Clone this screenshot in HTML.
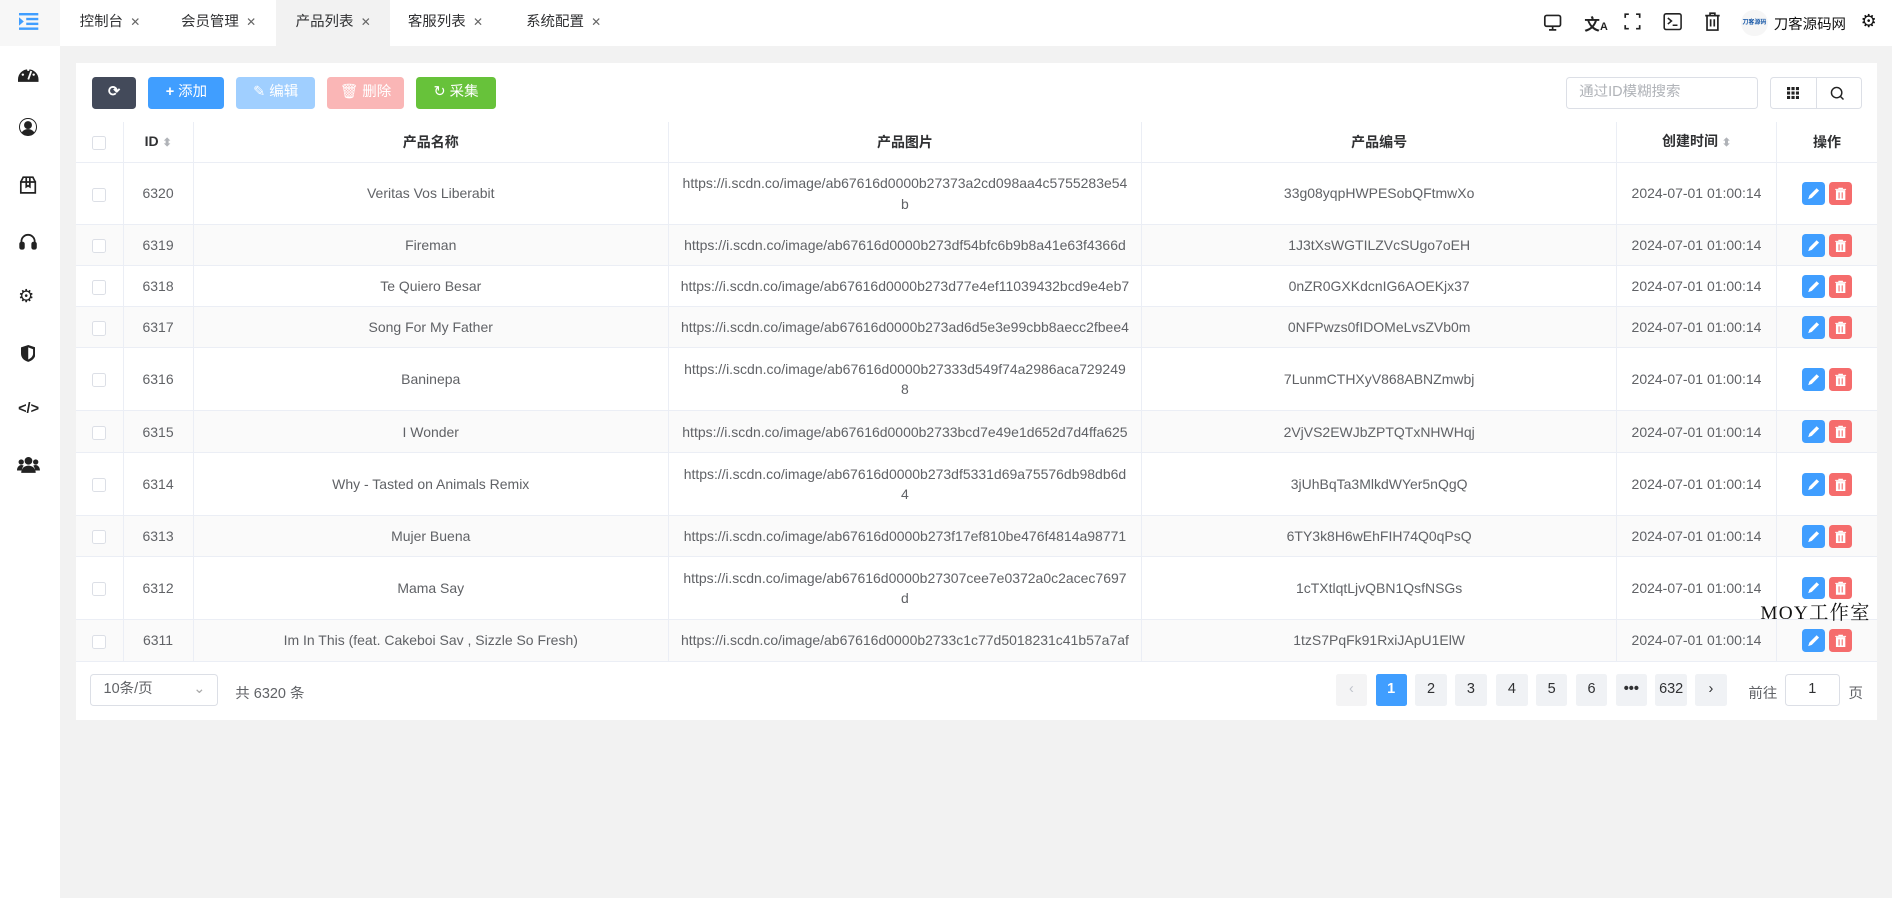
<!DOCTYPE html>
<html><head><meta charset="utf-8"><style>
html{zoom:1.2066}
body{margin:0;width:1568px;height:744px;background:#f2f2f2;font-family:"Liberation Sans","Noto Sans CJK SC",sans-serif;font-size:12px;color:#606266;position:relative;overflow:hidden}
.abs{position:absolute}
.top{left:0;top:0;width:1568px;height:38px;background:#fff}
.side{left:0;top:38px;width:50px;height:706px;background:#fff}
.corner{left:0;top:0;width:50px;height:38px;background:#f7f7f7}
.tab{top:0;height:38px;line-height:38px;font-size:12px;color:#303133}
.tab i{font-style:normal;color:#666;margin-left:6px;font-size:10px}
.card{left:63px;top:52px;width:1493px;height:545px;background:#fff}
.btn{top:64px;height:26px;border-radius:3px;color:#fff;line-height:26px;text-align:center;font-size:12px}
table{position:absolute;left:63px;top:101px;width:1493px;border-collapse:collapse;table-layout:fixed}
td,th{border-bottom:1px solid #ebeef5;border-right:1px solid #ebeef5;text-align:center;padding:0 10px;font-size:11.6px;line-height:17px;vertical-align:middle;word-break:break-all}
td.nw{white-space:nowrap;padding:0 2px}
th{height:33px;color:#303133;font-weight:bold}
tr.s td{background:#fafafa}
.cb{display:inline-block;width:10px;height:10px;border:1px solid #dcdfe6;border-radius:2px;background:#fff;vertical-align:middle}
.op{display:inline-block;width:19px;height:19px;border-radius:3px;vertical-align:middle;margin:0 2px;position:relative}
.op svg{position:absolute;left:4px;top:4px}
.pg{top:559px;width:26px;height:26px;background:#f0f2f5;border-radius:2px;text-align:center;line-height:26px;color:#303133;font-size:12px}
</style></head><body>
<div class="abs top"></div>
<div class="abs corner"></div>
<svg class="abs" style="left:16px;top:11px" width="16" height="14" viewBox="0 0 16 14"><g fill="#409eff"><rect x="0" y="0" width="16" height="2"/><rect x="6" y="4" width="10" height="2"/><rect x="6" y="8" width="10" height="2"/><rect x="0" y="12" width="16" height="2"/><path d="M0 3.5L4 7L0 10.5Z"/></g></svg>
<div class="abs" style="left:229px;top:0;width:94px;height:38px;background:#f2f2f2"></div>
<div class="abs tab" style="left:66px">控制台<i>✕</i></div>
<div class="abs tab" style="left:150px">会员管理<i>✕</i></div>
<div class="abs tab" style="left:245px">产品列表<i>✕</i></div>
<div class="abs tab" style="left:338px">客服列表<i>✕</i></div>
<div class="abs tab" style="left:436px">系统配置<i>✕</i></div>
<svg class="abs" style="left:1279px;top:11px" width="16" height="16" viewBox="0 0 16 16" fill="none" stroke="#222" stroke-width="1.4"><rect x="1.5" y="2" width="13" height="9" rx="1.5"/><path d="M8 11v3M5 14h6"/></svg>
<div class="abs" style="left:1313px;top:10px;font-size:13px;font-weight:bold;color:#222">文<span style="font-size:9px">A</span></div>
<svg class="abs" style="left:1346px;top:11px" width="14" height="14" viewBox="0 0 14 14" fill="none" stroke="#222" stroke-width="1.4"><path d="M1 4V1h3M10 1h3v3M13 10v3h-3M4 13H1v-3"/></svg>
<svg class="abs" style="left:1378px;top:10px" width="16" height="16" viewBox="0 0 16 16" fill="none" stroke="#222" stroke-width="1.3"><rect x="1" y="1.5" width="14" height="13" rx="1.5"/><path d="M4 5l3 2.5L4 10M8 11h4"/></svg>
<svg class="abs" style="left:1412px;top:10px" width="14" height="16" viewBox="0 0 14 16" fill="none" stroke="#222" stroke-width="1.4"><path d="M1 3h12M5 3V1h4v2M2.5 3v12h9V3M5.5 6v6M8.5 6v6"/></svg>
<div class="abs" style="left:1443px;top:8px;width:22px;height:22px;border-radius:50%;background:#f6f6f6;font-size:5px;color:#1a5aa8;line-height:22px;text-align:center;font-weight:bold">刀客源码</div>
<div class="abs" style="left:1470px;top:11px;font-size:12px;color:#111">刀客源码网</div>
<div class="abs" style="left:1542px;top:9px;font-size:15px;color:#111">⚙</div>
<div class="abs side"></div>
<svg class="abs" style="left:15px;top:54px" width="17" height="14" viewBox="0 0 17 14"><path d="M0 12A8.5 8.5 0 0117 12v2H0z" fill="#222"/><path d="M8.5 12L11 5" stroke="#fff" stroke-width="1.5"/><circle cx="4" cy="8" r="1" fill="#fff"/><circle cx="8.5" cy="4" r="1" fill="#fff"/><circle cx="13" cy="8" r="1" fill="#fff"/></svg>
<div class="abs" style="left:16px;top:98px;width:13px;height:13px;border:1.5px solid #222;border-radius:50%;background:radial-gradient(circle at 50% 38%,#222 3px,transparent 3.5px),radial-gradient(circle at 50% 110%,#222 6px,transparent 6.5px)"></div>
<svg class="abs" style="left:16px;top:146px" width="15" height="15" viewBox="0 0 15 15" fill="none" stroke="#222" stroke-width="1.4"><path d="M1.5 5h12v9h-12zM1.5 5l2-4h8l2 4M6 5V1M9 5V1M6 5v4l1.5-1 1.5 1V5"/></svg>
<svg class="abs" style="left:16px;top:193px" width="15" height="14" viewBox="0 0 15 14" fill="none" stroke="#222" stroke-width="1.5"><path d="M2 10V7a5.5 5.5 0 0111 0v3"/><rect x="1" y="8" width="3" height="5" rx="1" fill="#222"/><rect x="11" y="8" width="3" height="5" rx="1" fill="#222"/></svg>
<div class="abs" style="left:15px;top:237px;font-size:15px;color:#222">⚙</div>
<svg class="abs" style="left:17px;top:286px" width="12" height="14" viewBox="0 0 12 14"><path d="M6 0L12 2v5c0 4-3 6-6 7C3 13 0 11 0 7V2z" fill="#222"/><path d="M6 2v10c2-1 4-2.5 4-5V3.5z" fill="#fff"/></svg>
<div class="abs" style="left:15px;top:332px;font-size:12px;color:#222;font-weight:bold">&lt;/&gt;</div>
<svg class="abs" style="left:14px;top:378px" width="19" height="15" viewBox="0 0 19 15" fill="#222"><circle cx="9.5" cy="4" r="3.2"/><path d="M3.5 14c0-4 3-6 6-6s6 2 6 6z"/><circle cx="3.5" cy="5" r="2.2"/><circle cx="15.5" cy="5" r="2.2"/><path d="M0 12c0-3 2-4.5 3.5-4.5 1 0 2 .5 2 .5-1 1.5-1.5 3-1.5 4z"/><path d="M19 12c0-3-2-4.5-3.5-4.5-1 0-2 .5-2 .5 1 1.5 1.5 3 1.5 4z"/></svg>
<div class="abs card"></div>
<div class="abs btn" style="left:76px;width:37px;background:#434a5a;font-weight:bold">⟳</div>
<div class="abs btn" style="left:123px;width:63px;background:#409eff"><b>+</b> 添加</div>
<div class="abs btn" style="left:196px;width:65px;background:#a0cfff">✎ 编辑</div>
<div class="abs btn" style="left:271px;width:64px;background:#fab6b6">🗑 删除</div>
<div class="abs btn" style="left:345px;width:66px;background:#67c23a">↻ 采集</div>
<div class="abs" style="left:1298px;top:64px;border:1px solid #dcdfe6;border-radius:3px;color:#b0b3b8;line-height:24px;padding-left:10px;box-sizing:border-box;width:159px;height:26px">通过ID模糊搜索</div>
<div class="abs" style="left:1467px;top:64px;width:76px;height:26px;border:1px solid #dcdfe6;border-radius:3px;box-sizing:border-box"></div>
<div class="abs" style="left:1505px;top:64px;width:1px;height:26px;background:#dcdfe6"></div>
<svg class="abs" style="left:1481px;top:72px" width="10" height="10" viewBox="0 0 10 10" fill="#222"><rect width="2.6" height="2.6"/><rect x="3.7" width="2.6" height="2.6"/><rect x="7.4" width="2.6" height="2.6"/><rect y="3.7" width="2.6" height="2.6"/><rect x="3.7" y="3.7" width="2.6" height="2.6"/><rect x="7.4" y="3.7" width="2.6" height="2.6"/><rect y="7.4" width="2.6" height="2.6"/><rect x="3.7" y="7.4" width="2.6" height="2.6"/><rect x="7.4" y="7.4" width="2.6" height="2.6"/></svg>
<svg class="abs" style="left:1517px;top:71px" width="12" height="12" viewBox="0 0 12 12" fill="none" stroke="#222" stroke-width="1.2"><circle cx="5.5" cy="5.5" r="4.3"/><path d="M8.7 8.7l2.5 2.5"/></svg>
<svg width="0" height="0" style="position:absolute"><defs>
<g id="pen"><path d="M1 10l1-3 6-6 2 2-6 6z" fill="#fff"/></g>
<g id="bin"><path d="M1 2h9M4 2V1h3v1M2 3h7v8H2z" fill="#fff" stroke="#fff" stroke-width=".8"/><path d="M4.2 4.5v5M6.8 4.5v5" stroke="#f56c6c" stroke-width=".9"/></g>
</defs></svg>
<table>
<colgroup><col style="width:39px"><col style="width:58px"><col style="width:394px"><col style="width:392px"><col style="width:394px"><col style="width:132px"><col style="width:84px"></colgroup>
<tr><th><span class="cb"></span></th><th>ID <span style="color:#b0b3b8;font-size:9px">⬍</span></th><th>产品名称</th><th>产品图片</th><th>产品编号</th><th>创建时间 <span style="color:#b0b3b8;font-size:9px">⬍</span></th><th style="border-right:none">操作</th></tr>
<tr style="height:52px"><td><span class="cb"></span></td><td>6320</td><td>Veritas Vos Liberabit</td><td>https://i.scdn.co/image/ab67616d0000b27373a2cd098aa4c5755283e54b</td><td>33g08yqpHWPESobQFtmwXo</td><td>2024-07-01 01:00:14</td><td style="border-right:none"><span class="op" style="background:#409eff"><svg width="11" height="11"><use href="#pen"/></svg></span><span class="op" style="background:#f56c6c"><svg width="11" height="11"><use href="#bin"/></svg></span></td></tr>
<tr class="s" style="height:34px"><td><span class="cb"></span></td><td>6319</td><td>Fireman</td><td class="nw">https://i.scdn.co/image/ab67616d0000b273df54bfc6b9b8a41e63f4366d</td><td>1J3tXsWGTILZVcSUgo7oEH</td><td>2024-07-01 01:00:14</td><td style="border-right:none"><span class="op" style="background:#409eff"><svg width="11" height="11"><use href="#pen"/></svg></span><span class="op" style="background:#f56c6c"><svg width="11" height="11"><use href="#bin"/></svg></span></td></tr>
<tr style="height:34px"><td><span class="cb"></span></td><td>6318</td><td>Te Quiero Besar</td><td class="nw">https://i.scdn.co/image/ab67616d0000b273d77e4ef11039432bcd9e4eb7</td><td>0nZR0GXKdcnIG6AOEKjx37</td><td>2024-07-01 01:00:14</td><td style="border-right:none"><span class="op" style="background:#409eff"><svg width="11" height="11"><use href="#pen"/></svg></span><span class="op" style="background:#f56c6c"><svg width="11" height="11"><use href="#bin"/></svg></span></td></tr>
<tr class="s" style="height:34px"><td><span class="cb"></span></td><td>6317</td><td>Song For My Father</td><td class="nw">https://i.scdn.co/image/ab67616d0000b273ad6d5e3e99cbb8aecc2fbee4</td><td>0NFPwzs0fIDOMeLvsZVb0m</td><td>2024-07-01 01:00:14</td><td style="border-right:none"><span class="op" style="background:#409eff"><svg width="11" height="11"><use href="#pen"/></svg></span><span class="op" style="background:#f56c6c"><svg width="11" height="11"><use href="#bin"/></svg></span></td></tr>
<tr style="height:52px"><td><span class="cb"></span></td><td>6316</td><td>Baninepa</td><td>https://i.scdn.co/image/ab67616d0000b27333d549f74a2986aca7292498</td><td>7LunmCTHXyV868ABNZmwbj</td><td>2024-07-01 01:00:14</td><td style="border-right:none"><span class="op" style="background:#409eff"><svg width="11" height="11"><use href="#pen"/></svg></span><span class="op" style="background:#f56c6c"><svg width="11" height="11"><use href="#bin"/></svg></span></td></tr>
<tr class="s" style="height:35px"><td><span class="cb"></span></td><td>6315</td><td>I Wonder</td><td class="nw">https://i.scdn.co/image/ab67616d0000b2733bcd7e49e1d652d7d4ffa625</td><td>2VjVS2EWJbZPTQTxNHWHqj</td><td>2024-07-01 01:00:14</td><td style="border-right:none"><span class="op" style="background:#409eff"><svg width="11" height="11"><use href="#pen"/></svg></span><span class="op" style="background:#f56c6c"><svg width="11" height="11"><use href="#bin"/></svg></span></td></tr>
<tr style="height:52px"><td><span class="cb"></span></td><td>6314</td><td>Why - Tasted on Animals Remix</td><td>https://i.scdn.co/image/ab67616d0000b273df5331d69a75576db98db6d4</td><td>3jUhBqTa3MlkdWYer5nQgQ</td><td>2024-07-01 01:00:14</td><td style="border-right:none"><span class="op" style="background:#409eff"><svg width="11" height="11"><use href="#pen"/></svg></span><span class="op" style="background:#f56c6c"><svg width="11" height="11"><use href="#bin"/></svg></span></td></tr>
<tr class="s" style="height:34px"><td><span class="cb"></span></td><td>6313</td><td>Mujer Buena</td><td class="nw">https://i.scdn.co/image/ab67616d0000b273f17ef810be476f4814a98771</td><td>6TY3k8H6wEhFIH74Q0qPsQ</td><td>2024-07-01 01:00:14</td><td style="border-right:none"><span class="op" style="background:#409eff"><svg width="11" height="11"><use href="#pen"/></svg></span><span class="op" style="background:#f56c6c"><svg width="11" height="11"><use href="#bin"/></svg></span></td></tr>
<tr style="height:52px"><td><span class="cb"></span></td><td>6312</td><td>Mama Say</td><td>https://i.scdn.co/image/ab67616d0000b27307cee7e0372a0c2acec7697d</td><td>1cTXtlqtLjvQBN1QsfNSGs</td><td>2024-07-01 01:00:14</td><td style="border-right:none"><span class="op" style="background:#409eff"><svg width="11" height="11"><use href="#pen"/></svg></span><span class="op" style="background:#f56c6c"><svg width="11" height="11"><use href="#bin"/></svg></span></td></tr>
<tr class="s" style="height:35px"><td><span class="cb"></span></td><td>6311</td><td>Im In This (feat. Cakeboi Sav , Sizzle So Fresh)</td><td class="nw">https://i.scdn.co/image/ab67616d0000b2733c1c77d5018231c41b57a7af</td><td>1tzS7PqFk91RxiJApU1ElW</td><td>2024-07-01 01:00:14</td><td style="border-right:none"><span class="op" style="background:#409eff"><svg width="11" height="11"><use href="#pen"/></svg></span><span class="op" style="background:#f56c6c"><svg width="11" height="11"><use href="#bin"/></svg></span></td></tr>
</table>
<div class="abs" style="left:1459px;top:495px;font-family:'Liberation Serif','Noto Serif CJK SC',serif;font-size:16px;color:#111;letter-spacing:1px">MOY工作室</div>
<div class="abs" style="left:75px;top:559px;width:106px;height:26px;border:1px solid #dcdfe6;border-radius:3px;box-sizing:border-box;line-height:24px;padding-left:10px">10条/页<span style="position:absolute;right:10px;color:#aaa">⌄</span></div>
<div class="abs" style="left:195px;top:565px">共 6320 条</div>
<div class="abs pg" style="left:1107px;color:#c0c4cc;background:#f4f4f5">‹</div>
<div class="abs pg" style="left:1140px;background:#409eff;color:#fff;font-weight:bold">1</div>
<div class="abs pg" style="left:1173px">2</div>
<div class="abs pg" style="left:1206px">3</div>
<div class="abs pg" style="left:1240px">4</div>
<div class="abs pg" style="left:1273px">5</div>
<div class="abs pg" style="left:1306px">6</div>
<div class="abs pg" style="left:1339px;font-weight:bold">•••</div>
<div class="abs pg" style="left:1372px">632</div>
<div class="abs pg" style="left:1405px">›</div>
<div class="abs" style="left:1449px;top:565px">前往</div>
<div class="abs" style="left:1479px;top:559px;width:46px;height:26px;border:1px solid #dcdfe6;border-radius:3px;box-sizing:border-box;text-align:center;line-height:24px;color:#303133">1</div>
<div class="abs" style="left:1532px;top:565px">页</div>
</body></html>
